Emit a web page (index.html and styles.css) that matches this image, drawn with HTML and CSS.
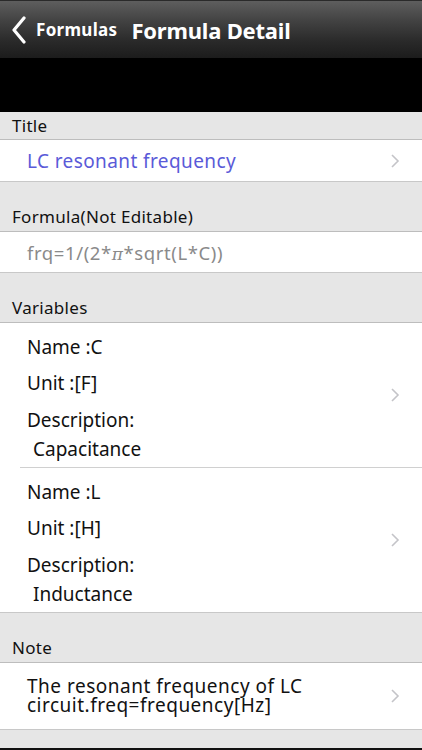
FILE: index.html
```html
<!DOCTYPE html>
<html>
<head>
<meta charset="utf-8">
<link rel="stylesheet" href="styles.css">
</head>
<body>
<div class="screen">
  <header class="nav">
    <svg class="back" width="16" height="28" viewBox="0 0 16 28"><path d="M13 2 L3 14 L13 26" fill="none" stroke="#fff" stroke-width="3.2" stroke-linecap="round" stroke-linejoin="round"/></svg>
    <span class="back-label">Formulas</span>
    <span class="nav-title">Formula Detail</span>
  </header>
  <div class="band"></div>
  <div class="list">
    <div class="sh sh-first"><span>Title</span></div>
    <div class="row row-title">
      <span class="title-text">LC resonant frequency</span>
      <span class="chev"><svg width="10" height="16" viewBox="0 0 10 16"><path d="M2 2 L8 8 L2 14" fill="none" stroke="#c4c4c8" stroke-width="1.6"/></svg></span>
    </div>
    <div class="sh"><span>Formula(Not Editable)</span></div>
    <div class="row row-formula">
      <span class="formula">frq=1/(2*<i class="pi">π</i>*sqrt(L*C))</span>
    </div>
    <div class="sh"><span>Variables</span></div>
    <div class="vars">
      <div class="var">
        <div class="var-lines">
          <div class="vl">Name :C</div>
          <div class="vl">Unit :[F]</div>
          <div class="vl vl-label">Description:</div>
          <div class="vl desc">Capacitance</div>
        </div>
        <span class="chev"><svg width="10" height="16" viewBox="0 0 10 16"><path d="M2 2 L8 8 L2 14" fill="none" stroke="#c4c4c8" stroke-width="1.6"/></svg></span>
      </div>
      <div class="var var-last">
        <div class="var-lines">
          <div class="vl">Name :L</div>
          <div class="vl">Unit :[H]</div>
          <div class="vl vl-label">Description:</div>
          <div class="vl desc">Inductance</div>
        </div>
        <span class="chev"><svg width="10" height="16" viewBox="0 0 10 16"><path d="M2 2 L8 8 L2 14" fill="none" stroke="#c4c4c8" stroke-width="1.6"/></svg></span>
      </div>
    </div>
    <div class="sh"><span>Note</span></div>
    <div class="row row-note">
      <div class="note"><div class="nl">The resonant frequency of LC</div><div class="nl">circuit.freq=frequency[Hz]</div></div>
      <span class="chev"><svg width="10" height="16" viewBox="0 0 10 16"><path d="M2 2 L8 8 L2 14" fill="none" stroke="#c4c4c8" stroke-width="1.6"/></svg></span>
    </div>
    <div class="tail"></div>
  </div>
</div>
</body>
</html>
```

FILE: styles.css
```css
* { box-sizing: border-box; }
html, body { margin: 0; padding: 0; background: #000; }
body { font-family: "Noto Sans", "Liberation Sans", sans-serif; color: #111; }
.screen { width: 422px; height: 750px; overflow: hidden; background: #e6e6e6; display: flex; flex-direction: column; }
.nav {
  height: 58px; flex: none;
  background: linear-gradient(#5e5e5e 0%, #424242 35%, #2a2a2a 70%, #1c1c1c 100%);
  border-top: 1px solid #2a2a2a;
  display: flex; align-items: center; color: #fff;
}
.back { margin-left: 11px; flex: none; }
.back-label { margin-left: 9px; font-size: 17px; font-weight: 700; letter-spacing: 0.3px; }
.nav-title { margin-left: 14px; font-size: 22px; font-weight: 700; letter-spacing: -0.2px; }
.band { height: 54px; background: #000; flex: none; }
.list { flex: 1; display: flex; flex-direction: column; background: #e6e6e6; }
.sh {
  height: 50px; flex: none; display: flex; align-items: flex-end;
  padding: 0 0 3px 12px; font-size: 17px; letter-spacing: 0.3px; color: #111;
  border-bottom: 1px solid #bdbdbd;
}
.sh-first { height: 28px; padding-bottom: 2px; }
.row { background: #fff; display: flex; align-items: center; border-bottom: 1px solid #c8c8c8; padding-left: 27px; flex: none; }
.row-title { height: 42px; }
.title-text { color: #5a5ad8; font-size: 19px; letter-spacing: 0.4px; flex: 1; }
.chev { width: 10px; margin-right: 22px; display: flex; align-items: center; flex: none; }
.row-formula { height: 41px; }
.formula { color: #8a8a8a; font-size: 18.5px; letter-spacing: 0.6px; }
.pi { font-family: "DejaVu Serif", serif; font-style: italic; font-size: 17px; }
.vars { background: #fff; padding-left: 20px; border-bottom: 1px solid #c8c8c8; flex: none; }
.var { display: flex; align-items: center; border-bottom: 1px solid #d0d0d0; height: 145px; padding-left: 7px; }
.var-last { border-bottom: none; height: 144px; }
.var-lines { flex: 1; align-self: flex-start; padding-top: 6px; }
.vl { font-size: 19px; height: 36px; line-height: 36px; }
.vl.vl-label { height: 39px; line-height: 39px; }
.vl.desc { padding-left: 6px; height: 19px; line-height: 19px; }
.row-note { height: 67px; }
.note { flex: 1; font-size: 19px; letter-spacing: 0.5px; }
.nl { height: 19px; line-height: 19px; }
.tail { flex: 1; background: #e6e6e6; border-bottom: 2px solid #111; }
```
